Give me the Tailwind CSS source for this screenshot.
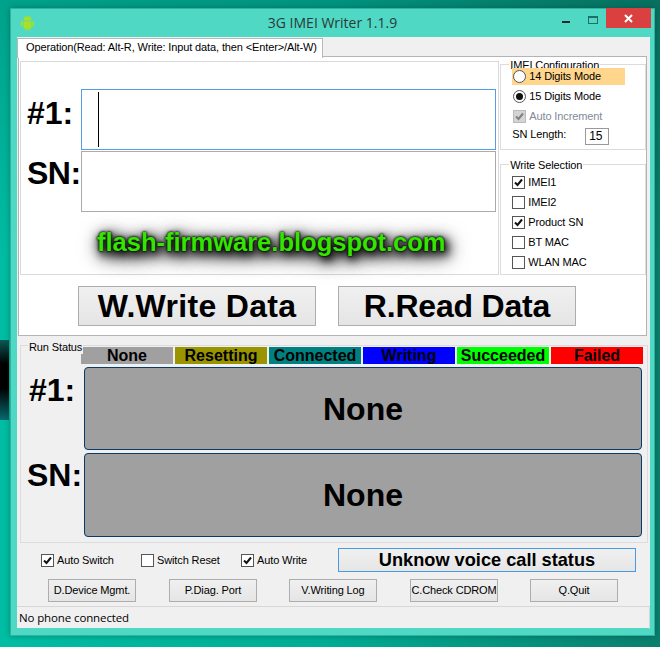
<!DOCTYPE html>
<html>
<head>
<meta charset="utf-8">
<script src="https://cdn.jsdelivr.net/npm/@tailwindcss/browser@4"></script>
</head>
<body class="relative w-[660px] h-[647px] overflow-hidden bg-[linear-gradient(180deg,rgba(0,50,40,0.2)_0%,rgba(0,50,40,0)_40%),linear-gradient(90deg,#00bda3_0%,#00ac94_50%,#0a7f6d_100%)] pt-[8px] pl-[10px] font-['Liberation_Sans',sans-serif] text-[11px] tracking-[-0.12px] text-black">
<div class="absolute left-0 top-[340px] w-[9px] h-[80px] bg-[linear-gradient(180deg,#0b5a55_0%,#000_30%,#000_60%,#086a70_100%)]"></div>
<div class="relative w-[645px] h-[628px] bg-[#4fd8c4] border border-[#2fb3a0] shadow-[0_0_6px_rgba(0,0,0,0.25)] flex flex-col">
  <!-- title bar -->
  <div class="h-[28px] relative flex items-start shrink-0">
    <svg class="ml-[9px] mt-[6px]" width="15" height="16" viewBox="0 0 15 16"><path fill="#a8e024" d="M3.500 5.500a4 4 0 0 1 8 0zM3.500 6.200h8v6.300a1 1 0 0 1-1 1h-.8v2h-1.500v-2H6.800v2H5.300v-2h-.8a1 1 0 0 1-1-1zM1 6.200a1 1 0 0 1 1.600 0v4.800a1 1 0 0 1-1.600 0zM12.400 6.200a1 1 0 0 1 1.600 0v4.800a1 1 0 0 1-1.600 0z"/><path stroke="#a8e024" stroke-width="0.7" d="M5 1l1 1.500M10 1L9 2.500"/></svg>
    <div class="flex-1 text-center mt-[5px] ml-[68px] text-[14px] tracking-normal leading-[18px] text-[#2c3a38] font-['Open_Sans',sans-serif]">3G IMEI Writer 1.1.9</div>
    <div class="w-[8px] h-[2px] bg-[#1c2c2a] mt-[12px] mr-[18px]"></div>
    <div class="w-[10px] h-[8px] border border-[#1f6f66] border-t-[2px] mt-[7px] mr-[8px]"></div>
    <div class="w-[45px] h-[20px] bg-[#db4040] flex items-center justify-center mr-[3px] -mt-[1px]">
      <svg width="9" height="9" viewBox="0 0 9 9"><path d="M1 1l7 7M8 1l-7 7" stroke="#fff" stroke-width="2"/></svg>
    </div>
  </div>
  <!-- client -->
  <div class="w-[633px] h-[591px] ml-[6px] bg-[#f0f0f0] flex flex-col">
    <!-- tab -->
    <div class="h-[19px] relative shrink-0">
      <div class="absolute left-0 top-[1px] w-[306px] h-[20px] bg-white border border-b-0 border-[#b8b8b8] z-10 pl-[8px] leading-[17px] whitespace-nowrap">Operation(Read: Alt-R, Write: Input data, then &lt;Enter&gt;/Alt-W)</div>
    </div>
    <!-- tab pane -->
    <div class="ml-[1px] w-[629px] h-[280px] bg-white border border-[#b4b4b4] shrink-0 flex flex-col">
      <div class="flex pl-[1px] pt-[4px] h-[218px]">
        <!-- left group -->
        <div class="w-[480px] h-[214px] border border-[#d9d9d9] relative">
          <div class="flex items-start h-[60px] mt-[27px]">
            <div class="w-[60px] pl-[6px] pt-[6px] text-[32px] tracking-normal leading-[36px] font-bold">#1:</div>
            <div class="w-[415px] h-[61px] border border-[#569de5] pl-[16px] py-[2px]"><div class="w-[1px] h-[55px] bg-black"></div></div>
          </div>
          <div class="flex items-start h-[61px] mt-[2px]">
            <div class="w-[60px] pl-[6px] pt-[4px] text-[32px] tracking-[-0.5px] leading-[36px] font-bold">SN:</div>
            <div class="w-[415px] h-[61px] border border-[#ababab]"></div>
          </div>
          <div class="ml-[76px] mt-[15px] text-[25.500px] tracking-normal leading-[30px] font-bold text-[#35e400] whitespace-nowrap [text-shadow:0_0_2px_#000,0_0_3px_#000,2px_3px_7px_#000,3px_4px_12px_#000,3px_4px_16px_#000,3px_5px_22px_#222]">flash-firmware.blogspot.com</div>
        </div>
        <!-- right column -->
        <div class="ml-[1px] w-[146px] flex flex-col">
          <div class="relative h-[86px] mt-[3px] border border-[#dcdcdc]">
            <div class="absolute left-[8px] -top-[7px] bg-white px-[1px] leading-[14px] whitespace-nowrap">IMEI Configuration</div>
            <div class="absolute left-[11px] top-[3px] w-[113px] h-[17px] bg-[#ffd68c] flex items-center">
              <div class="w-[13px] h-[13px] rounded-full border border-[#555] bg-white ml-[1px]"></div><span class="ml-[3px]">14 Digits Mode</span>
            </div>
            <div class="absolute left-[11px] top-[23px] h-[17px] flex items-center">
              <div class="w-[13px] h-[13px] rounded-full border border-[#555] bg-white ml-[1px] flex items-center justify-center"><div class="w-[7px] h-[7px] rounded-full bg-[#111]"></div></div><span class="ml-[3px]">15 Digits Mode</span>
            </div>
            <div class="absolute left-[11px] top-[43px] h-[17px] flex items-center text-[#7f8a99]">
              <div class="w-[13px] h-[13px] border border-[#bbb] bg-[#d4d4d4] ml-[1px] flex items-center justify-center"><svg width="11" height="11" viewBox="0 0 11 11"><path d="M2 5.500l2.500 2.500L9 2.500" fill="none" stroke="#808080" stroke-width="2"/></svg></div><span class="ml-[3px]">Auto Increment</span>
            </div>
            <div class="absolute left-[11px] top-[61px] leading-[16px]">SN Length:</div>
            <div class="absolute left-[84px] top-[63px] w-[24px] h-[17px] border border-[#999] pl-[3px] text-[12px] leading-[15px]">15</div>
          </div>
          <div class="relative h-[111px] mt-[14px] border border-[#dcdcdc] pt-[7px] pl-[11px] flex flex-col">
            <div class="absolute left-[8px] -top-[7px] bg-white px-[1px] leading-[14px] whitespace-nowrap">Write Selection</div>
            <div class="h-[20px] flex items-center"><div class="w-[13px] h-[13px] border border-[#555] flex items-center justify-center"><svg width="11" height="11" viewBox="0 0 11 11"><path d="M2 5.500l2.500 2.500L9 2.500" fill="none" stroke="#111" stroke-width="2"/></svg></div><span class="ml-[3px]">IMEI1</span></div>
            <div class="h-[20px] flex items-center"><div class="w-[13px] h-[13px] border border-[#555]"></div><span class="ml-[3px]">IMEI2</span></div>
            <div class="h-[20px] flex items-center"><div class="w-[13px] h-[13px] border border-[#555] flex items-center justify-center"><svg width="11" height="11" viewBox="0 0 11 11"><path d="M2 5.500l2.500 2.500L9 2.500" fill="none" stroke="#111" stroke-width="2"/></svg></div><span class="ml-[3px]">Product SN</span></div>
            <div class="h-[20px] flex items-center"><div class="w-[13px] h-[13px] border border-[#555]"></div><span class="ml-[3px]">BT MAC</span></div>
            <div class="h-[20px] flex items-center"><div class="w-[13px] h-[13px] border border-[#555]"></div><span class="ml-[3px]">WLAN MAC</span></div>
          </div>
        </div>
      </div>
      <!-- big buttons -->
      <div class="flex pl-[59px] gap-[22px] mt-[11px]">
        <div class="w-[238px] h-[40px] border border-[#adadad] bg-[linear-gradient(#f0f0f0,#e5e5e5)] flex items-center justify-center text-[32px] tracking-[0.3px] font-bold">W.Write Data</div>
        <div class="w-[238px] h-[40px] border border-[#adadad] bg-[linear-gradient(#f0f0f0,#e5e5e5)] flex items-center justify-center text-[32px] tracking-[-0.2px] font-bold">R.Read Data</div>
      </div>
    </div>
    <!-- run status -->
    <div class="relative ml-[3px] mt-[9px] w-[628px] h-[198px] border border-[#dcdcdc] shrink-0">
      <div class="absolute left-[7px] -top-[6px] bg-[#f0f0f0] px-[1px] leading-[14px] whitespace-nowrap">Run Status</div>
      <div class="flex gap-[2px] ml-[60px] mt-[1px] text-[16px] tracking-normal leading-[17px] font-bold text-center">
        <div class="w-[92px] h-[17px] bg-[#a0a0a0]">None</div>
        <div class="w-[92px] h-[17px] bg-[#999400]">Resetting</div>
        <div class="w-[92px] h-[17px] bg-[#008080]">Connected</div>
        <div class="w-[92px] h-[17px] bg-[#0000ff]">Writing</div>
        <div class="w-[92px] h-[17px] bg-[#00ff00]">Succeeded</div>
        <div class="w-[92px] h-[17px] bg-[#ff0000]">Failed</div>
      </div>
      <div class="flex mt-[3px] h-[83px] tracking-normal">
        <div class="w-[63px] pl-[8px] pt-[5px] text-[32px] leading-[36px] font-bold">#1:</div>
        <div class="w-[558px] h-[83px] bg-[#a0a0a0] border border-[#0a3a66] rounded-[4px] flex items-center justify-center text-[32px] font-bold">None</div>
      </div>
      <div class="flex mt-[3px] h-[84px] tracking-normal">
        <div class="w-[63px] pl-[6px] pt-[4px] text-[32px] leading-[36px] font-bold">SN:</div>
        <div class="w-[558px] h-[84px] bg-[#a0a0a0] border border-[#0a3a66] rounded-[4px] flex items-center justify-center text-[32px] font-bold">None</div>
      </div>
    </div>
    <!-- options row -->
    <div class="flex items-center h-[24px] mt-[5px] pl-[24px] shrink-0">
      <div class="w-[100px] flex items-center"><div class="w-[13px] h-[13px] border border-[#555] bg-white flex items-center justify-center"><svg width="11" height="11" viewBox="0 0 11 11"><path d="M2 5.500l2.500 2.500L9 2.500" fill="none" stroke="#111" stroke-width="2"/></svg></div><span class="ml-[3px]">Auto Switch</span></div>
      <div class="w-[100px] flex items-center"><div class="w-[13px] h-[13px] border border-[#555] bg-white"></div><span class="ml-[3px]">Switch Reset</span></div>
      <div class="w-[97px] flex items-center"><div class="w-[13px] h-[13px] border border-[#555] bg-white flex items-center justify-center"><svg width="11" height="11" viewBox="0 0 11 11"><path d="M2 5.500l2.500 2.500L9 2.500" fill="none" stroke="#111" stroke-width="2"/></svg></div><span class="ml-[3px]">Auto Write</span></div>
      <div class="w-[298px] h-[24px] border border-[#4b9ae0] bg-[linear-gradient(#f0f0f0,#e5e5e5)] flex items-center justify-center pt-[1px] text-[18.200px] tracking-normal font-bold">Unknow voice call status</div>
    </div>
    <!-- buttons row -->
    <div class="flex h-[23px] mt-[7px] pl-[31px] shrink-0 text-center leading-[21px]">
      <div class="w-[88px] border border-[#adadad] bg-[linear-gradient(#f0f0f0,#e5e5e5)]">D.Device Mgmt.</div>
      <div class="w-[88px] ml-[33px] border border-[#adadad] bg-[linear-gradient(#f0f0f0,#e5e5e5)]">P.Diag. Port</div>
      <div class="w-[88px] ml-[32px] border border-[#adadad] bg-[linear-gradient(#f0f0f0,#e5e5e5)]">V.Writing Log</div>
      <div class="w-[88px] ml-[33px] border border-[#adadad] bg-[linear-gradient(#f0f0f0,#e5e5e5)] whitespace-nowrap">C.Check CDROM</div>
      <div class="w-[88px] ml-[32px] border border-[#adadad] bg-[linear-gradient(#f0f0f0,#e5e5e5)]">Q.Quit</div>
    </div>
    <!-- status bar -->
    <div class="mt-[4px] flex-1 border-t border-r border-[#d7d7d7] pl-[2px] leading-[22px] font-['Open_Sans',sans-serif] text-[11.500px]">No phone connected</div>
  </div>
</div>
</body>
</html>
